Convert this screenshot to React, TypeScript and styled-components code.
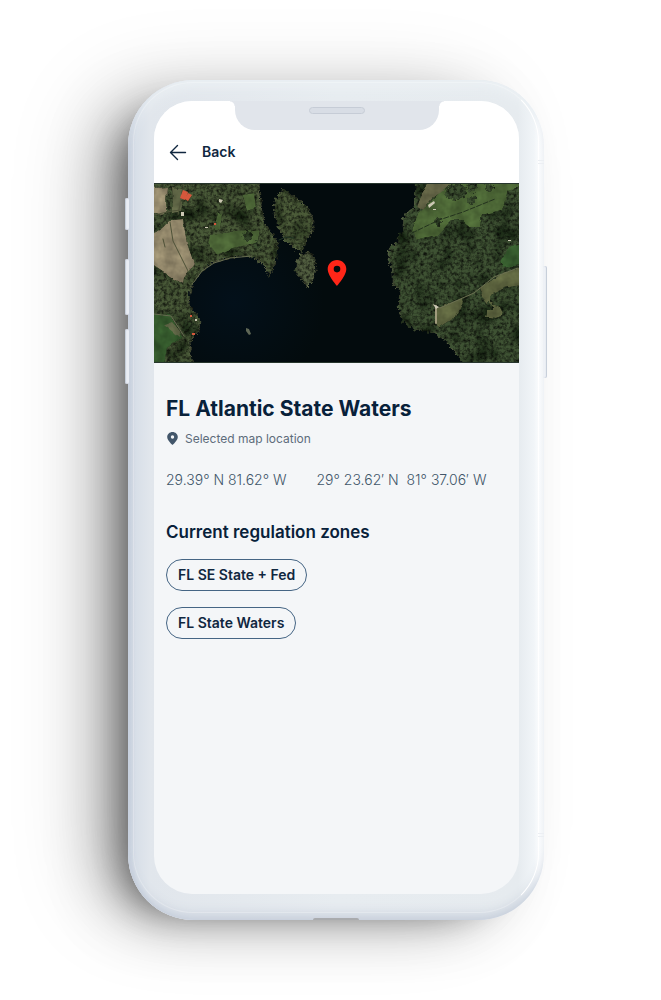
import React from "react";
import styled, { createGlobalStyle } from "styled-components";

const GlobalStyle = createGlobalStyle`
  *, *::before, *::after { box-sizing: border-box; }
  body { margin: 0; background: #fff; font-family: Inter, "Liberation Sans", sans-serif; }
`;

const Page = styled.main`
  display: flex;
  min-height: 100vh;
  padding: 80px 117px 80px 128px;
  overflow: hidden;
`;

const Phone = styled.div`
  position: relative;
  display: flex;
  flex: 1;
  min-width: 0;
  max-width: 440px;
  min-height: 840px;
  padding: 21px 25px 26px 26px;
  border-radius: 66px;
  background: linear-gradient(90deg, #c9d1dd 0, #d8dfe8 8px, #e1e6ec 22px, #e7ecf0 50%, #e6ebef calc(100% - 26px), #f1f5f8 calc(100% - 10px), #fcfdfe calc(100% - 5px), #fff 100%);
  box-shadow:
    inset 0 -10px 12px -4px #c8d0dc,
    inset 0 12px 14px -6px #edf2f5,
    inset 3px 0 4px -1px #bfc9d9,
    -28px 14px 36px -26px rgba(0, 0, 0, 0.4),
    -34px 12px 66px -22px rgba(0, 0, 0, 0.42),
    -44px 2px 90px -14px rgba(0, 0, 0, 0.18);
`;

const Rim = styled.div`
  position: absolute;
  inset: 2px 5px 7px 5px;
  border: 1px solid rgba(255, 255, 255, 0.25);
  border-right-color: #fff;
  border-radius: 60px;
  pointer-events: none;
`;

const SideKey = styled.span<{ $side: "left" | "right"; $top: number; $length: number }>`
  position: absolute;
  ${(p) => p.$side}: -3px;
  top: ${(p) => p.$top}px;
  width: 4px;
  height: ${(p) => p.$length}px;
  border-radius: 3px;
  background: ${(p) => (p.$side === "left" ? "#e9edf4" : "#eef1f6")};
  box-shadow: inset ${(p) => (p.$side === "left" ? "1px" : "-1px")} 0 1px #c3cbd8;
`;

const Antenna = styled.span<{ $top: number }>`
  position: absolute;
  right: 0;
  top: ${(p) => p.$top}px;
  width: 6px;
  height: 4px;
  border: solid #eceff3;
  border-width: 1px 0;
`;

const Port = styled.span`
  position: absolute;
  left: 50%;
  bottom: 0;
  width: 46px;
  height: 2px;
  border-radius: 4px 4px 0 0;
  background: #a9abae;
  transform: translateX(-50%);
`;

const Screen = styled.div`
  position: relative;
  flex: 1;
  min-width: 0;
  border-radius: 38px;
  overflow: hidden;
  background: #f4f6f8;
`;

const Notch = styled.div`
  position: absolute;
  top: 0;
  left: 50%;
  z-index: 1;
  display: flex;
  justify-content: center;
  width: 204px;
  height: 29px;
  padding-top: 6px;
  border-radius: 0 0 20px 20px;
  background: #e1e5eb;
  transform: translateX(-50%);

  &::before,
  &::after {
    content: "";
    position: absolute;
    top: 0;
    width: 5px;
    height: 5px;
  }
  &::before {
    right: 100%;
    background: radial-gradient(circle at 0 100%, transparent 4px, #e1e5eb 5px);
  }
  &::after {
    left: 100%;
    background: radial-gradient(circle at 100% 100%, transparent 4px, #e1e5eb 5px);
  }
`;

const Speaker = styled.span`
  width: 56px;
  height: 7px;
  border: 1px solid #c6ccd6;
  border-radius: 4px;
  background: #d8dde5;
`;

const Header = styled.header`
  padding: 38px 12px 18px;
  background: #fff;
`;

const BackButton = styled.button`
  display: flex;
  align-items: center;
  gap: 12px;
  height: 26px;
  padding: 0;
  border: 0;
  background: none;
  color: #10273f;
  font: 600 14px/20px Inter, sans-serif;
  cursor: pointer;
`;

const MapArea = styled.div`
  position: relative;
  height: 180px;
  background: #030b0d;
`;

const MapImage = styled.svg`
  display: block;
  width: 100%;
  height: 100%;
`;

const Marker = styled.svg`
  position: absolute;
  top: 50%;
  left: 50%;
  width: 20px;
  height: 28px;
  transform: translate(-50%, -50%);
`;

const Details = styled.section`
  padding: 30px 12px;
`;

const Title = styled.h1`
  margin: 0;
  color: #08213a;
  font: 700 21px/32px Inter, sans-serif;
  white-space: nowrap;
`;

const Source = styled.p`
  display: flex;
  align-items: center;
  gap: 6px;
  margin: 4px 0 0;
  color: #5d6c7b;
  font-size: 12px;
  line-height: 20px;
`;

const Coordinates = styled.div`
  display: flex;
  gap: 30px;
  margin-top: 21px;
  color: #42566a;
  font-size: 14px;
  font-weight: 300;
  line-height: 20px;
  white-space: pre;
`;

const Subtitle = styled.h2`
  margin: 30px 0 15px;
  color: #08213a;
  font: 600 17px/24px Inter, sans-serif;
`;

const Zones = styled.div`
  display: flex;
  flex-direction: column;
  align-items: flex-start;
  gap: 16px;
`;

const Zone = styled.button`
  height: 32px;
  padding: 0 11px;
  border: 1px solid #456584;
  border-radius: 16px;
  background: transparent;
  color: #10273f;
  font: 600 14px/20px Inter, sans-serif;
  cursor: pointer;
`;

function Aerial() {
  return (
    <MapImage viewBox="0 0 365 180" preserveAspectRatio="xMidYMid slice" role="img" aria-label="Satellite map">
      <defs>
        <radialGradient id="bay" cx="80" cy="120" r="90" gradientUnits="userSpaceOnUse">
          <stop offset="0" stopColor="#03101a" />
          <stop offset="1" stopColor="#030b0d" />
        </radialGradient>
        <filter id="trees" x="0" y="0" width="365" height="180" filterUnits="userSpaceOnUse" colorInterpolationFilters="sRGB">
          <feTurbulence type="fractalNoise" baseFrequency="0.05" numOctaves="2" seed="5" result="big" />
          <feColorMatrix in="big" values="1.800 0 0 0 0.050  1.500 0 0 0 0.200  1.800 0 0 0 0.050  0 0 0 0 1" result="tone" />
          <feTurbulence type="fractalNoise" baseFrequency="0.300" numOctaves="4" seed="8" result="n" />
          <feColorMatrix in="n" values="2 0 0 0 -0.250  2 0 0 0 -0.250  2 0 0 0 -0.250  0 0 0 0 1" result="g" />
          <feDisplacementMap in="SourceGraphic" in2="n" scale="7" xChannelSelector="R" yChannelSelector="G" result="d" />
          <feComposite in="d" in2="g" operator="arithmetic" k1="0.900" k2="0.250" result="m" />
          <feComposite in="m" in2="tone" operator="arithmetic" k1="1" result="t" />
          <feComposite in="t" in2="d" operator="in" />
        </filter>
        <filter id="grass" x="0" y="0" width="365" height="180" filterUnits="userSpaceOnUse" colorInterpolationFilters="sRGB">
          <feTurbulence type="fractalNoise" baseFrequency="0.090" numOctaves="3" seed="3" result="n" />
          <feColorMatrix in="n" values="1 0 0 0 0  1 0 0 0 0  1 0 0 0 0  0 0 0 0 1" result="g" />
          <feDisplacementMap in="SourceGraphic" in2="n" scale="4" xChannelSelector="R" yChannelSelector="G" result="d" />
          <feComposite in="d" in2="g" operator="arithmetic" k1="0.500" k2="0.750" result="m" />
          <feComposite in="m" in2="d" operator="in" />
        </filter>
      </defs>
      <rect width="365" height="180" fill="url(#bay)" />

      <g filter="url(#trees)" stroke="#545a40" strokeWidth="1">
        <path fill="#3f4d30" d="M-9-9H104L106 12 108 28 111 42 118 50 124 60 123 72 120 82 115 94 113 86 108 80 98 74 85 73 70 76 58 80 48 88 40 98 36 110 35 122 40 128 47 138 44 150 36 158 37 170 40 189H-9z" />
        <path fill="#414f31" d="M129 5 121 17 120 30 124 44 129 55 139 65 148 69 151 60 159 47 159 37 154 25 144 15 134 10z" />
        <path fill="#475238" d="M154 69 146 72 142 80 142 89 148 97 153 104 158 99 162 87 161 75z" />
        <path fill="#36472c" d="M264-9 261 10 261 24 249 34 249 47 243 55 244 60 235 64 235 79 239 87 239 102 246 107 244 125 249 139 261 147 281 150 294 160 309 180 312 189H374V-9z" />
      </g>

      <g filter="url(#grass)">
        <path fill="#8f8468" d="M-5 5 13 4 12 29 7 33-5 28zM16 37 29 36 33 60 40 80 29 95 28 101 16 94-5 80V53L8 45z" />
        <path fill="#4a6335" d="M56 52 76 49 106 47 103 60 79 65 63 72 54 60zM64 30 68 32 66 46 59 48zM88 12 100 10 102 24 93 27z" />
        <path fill="#33572b" d="M-5 130 16 132 29 154 13 164 9 190H-5z" />
        <path fill="#5d6344" d="M10 142 18 139 26 148 25 154zM18 4 28 5 27 29 19 30z" />
        <path fill="#4b6535" d="M281 14 264 30 258 47 261 57 284 52 298 37 308 37 316 44 326 44 328 32 348 27 354 7 372 3V-8H301z" />
        <path fill="#355a2d" d="M372 58 353 65 347 79 350 84 372 82z" />
        <path fill="#5c633e" d="M372 84 348 90 338 97 325 105 328 115 334 123 332 134 342 135 350 132 346 124 336 119 337 111 350 105 372 101zM281 126 308 115 309 119 301 134 284 145 281 140z" />
        <path fill="#626345" d="M275 0H299L286 10 278 15 268 27 263 24 268 10z" />
      </g>

      <g filter="url(#trees)" fill="#34452a">
        <ellipse cx="302" cy="9" rx="11" ry="8" />
        <circle cx="318" cy="4" r="5" />
        <circle cx="318" cy="17" r="4" />
        <circle cx="335" cy="4" r="4" />
        <circle cx="284" cy="39" r="4" />
        <circle cx="94" cy="53" r="5" />
        <circle cx="103" cy="63" r="4" />
        <circle cx="335" cy="124" r="4" />
        <path d="M337 113 349 106 374 103V128L350 127 338 120z" />
        <ellipse cx="36" cy="145" rx="8" ry="7" />
      </g>

      <g fill="none" strokeLinecap="round" strokeLinejoin="round">
        <path stroke="#4e5238" strokeWidth="1" d="M16 39 19 58 34 88M0 32 18 28 27 27M30 0 24 32M9 56 11 64" />
        <path stroke="#24331e" strokeWidth="1" strokeDasharray="5 2" d="M258 50 285 37 309 29 341 16" />
        <path stroke="#666b50" strokeWidth="1" d="M0 131 17 133 30 153M40 99 48 88 60 80 76 75 98 73" />
        <path stroke="#6c7051" strokeWidth="1" d="M279 122 286 125 320 110 340 94 364 85" />
        <path stroke="#a09b7d" strokeWidth="2" d="M282 123V140" />
        <path stroke="#203524" strokeWidth="1" d="M125 57 132 54 140 55" />
      </g>
      <path fill="#d5573c" d="M29 7 34 9 31 17 26 15zM34 10 38 12 34 18 31 16zM60 40h2v2h-2zM36 132h2v2h-2zM38 150h3v2h-3z" />
      <path fill="#cdc8b5" d="M27 29h3v4h-3zM65 16 69 17 67 20 65 19zM274 22 280 18 281 20 275 25zM279 26h3v1h-3zM51 44h3v1h-3zM41 136h2v2h-2zM279 121 285 124 282 126zM354 57h3v1h-3z" />
      <path fill="#5f6756" d="M92 145 95 146 97 151 95 152 92 148z" />
      <path stroke="#27362d" strokeWidth="1" d="M0 .5H365M0 179.5H365" />
    </MapImage>
  );
}

const SIDE_KEYS = [
  { side: "left", top: 118, length: 32 },
  { side: "left", top: 179, length: 56 },
  { side: "left", top: 249, length: 55 },
  { side: "right", top: 186, length: 112 },
] as const;

const ZONES = ["FL SE State + Fed", "FL State Waters"];

export default function App() {
  return (
    <>
      <GlobalStyle />
      <Page>
        <Phone>
          <Rim />
          {SIDE_KEYS.map((k) => (
            <SideKey key={k.side + k.top} $side={k.side} $top={k.top} $length={k.length} />
          ))}
          <Antenna $top={80} />
          <Antenna $top={753} />
          <Port />
          <Screen>
            <Notch>
              <Speaker />
            </Notch>
            <Header>
              <BackButton type="button">
                <svg width="24" height="24" viewBox="0 0 24 24" fill="none" stroke="#10273f" strokeWidth="1.4" strokeLinecap="round" strokeLinejoin="round" aria-hidden="true">
                  <path d="M19.500 12.500H4.500M11.500 5.500 4.500 12.500 11.500 19.500" />
                </svg>
                Back
              </BackButton>
            </Header>
            <MapArea>
              <Aerial />
              <Marker viewBox="0 0 20 28" aria-hidden="true">
                <path fill="#ff2618" fillRule="evenodd" d="M10 1C4.800 1 .7 5 .7 10.100.7 16.800 10 27 10 27s9.300-10.200 9.300-16.900C19.300 5 15.200 1 10 1zm0 5.800a3.300 3.300 0 1 1 0 6.600 3.300 3.300 0 0 1 0-6.600z" />
              </Marker>
            </MapArea>
            <Details>
              <Title>FL Atlantic State Waters</Title>
              <Source>
                <svg width="13" height="14" viewBox="0 0 13 14" aria-hidden="true">
                  <path fill="#42566a" fillRule="evenodd" d="M6.500 0C3.600 0 1.200 2.200 1.200 5c0 3.600 5.300 8 5.300 8s5.300-4.400 5.300-8c0-2.800-2.400-5-5.300-5zm0 3.300a1.700 1.700 0 1 1 0 3.400 1.700 1.700 0 0 1 0-3.400z" />
                </svg>
                Selected map location
              </Source>
              <Coordinates>
                <span>29.39° N 81.62° W</span>
                <span>{"29° 23.62′ N  81° 37.06′ W"}</span>
              </Coordinates>
              <Subtitle>Current regulation zones</Subtitle>
              <Zones>
                {ZONES.map((z) => (
                  <Zone key={z} type="button">
                    {z}
                  </Zone>
                ))}
              </Zones>
            </Details>
          </Screen>
        </Phone>
      </Page>
    </>
  );
}
